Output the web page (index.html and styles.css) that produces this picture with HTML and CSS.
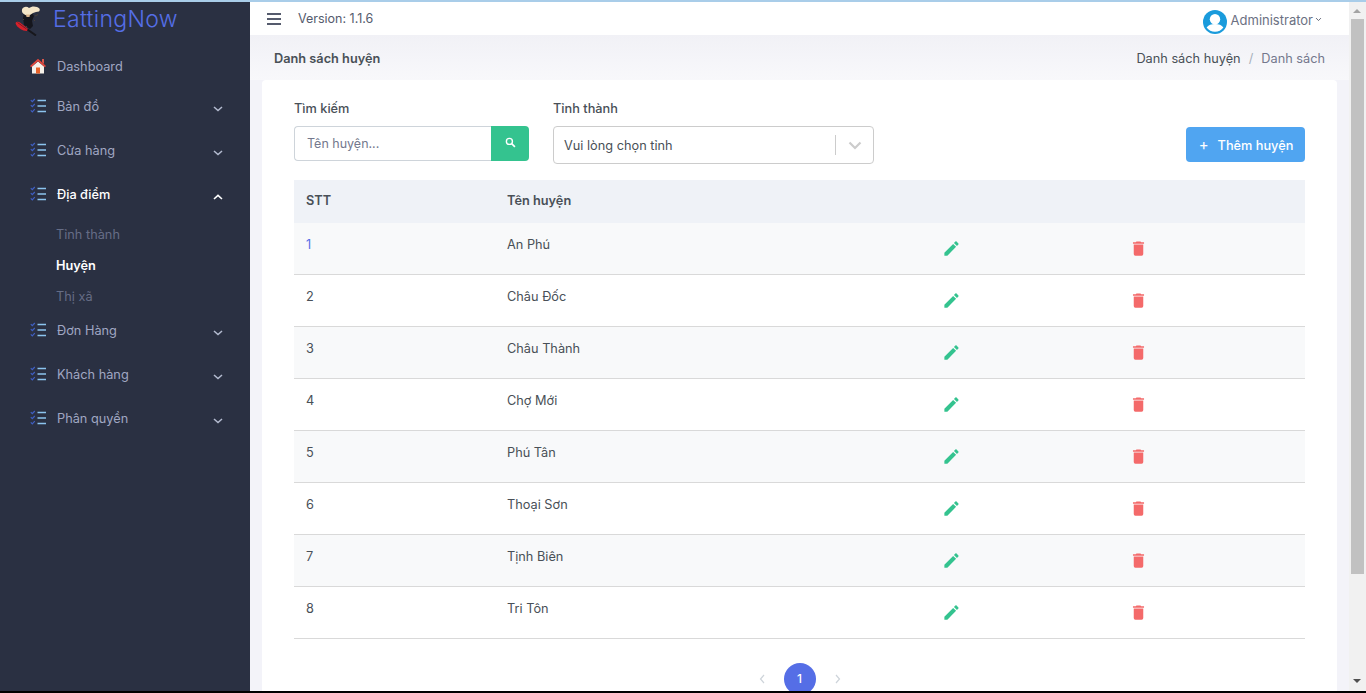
FILE: index.html
```html
<!DOCTYPE html>
<html lang="vi">
<head>
<meta charset="utf-8">
<title>EattingNow</title>
<link rel="stylesheet" href="styles.css">
</head>
<body>
<svg class="defs" width="0" height="0" aria-hidden="true">
  <symbol id="list" viewBox="0 0 16 16">
    <path d="M.8 2.200l1.500 1.500L4.800 1M.8 7.200l1.500 1.500L4.800 6M.8 12.400l1.500 1.500 2.500-2.700" fill="none" stroke="#3f5fc4" stroke-width="1.200"/>
    <path d="M7.500 2.500h8.500M7.500 8h8.500M7.500 13.500h8.500" fill="none" stroke="#8cc4ee" stroke-width="1.500"/>
  </symbol>
  <symbol id="chev-down" viewBox="0 0 10 6"><path d="M1 1l4 3.600L9 1" fill="none" stroke="#b4bbd0" stroke-width="1.500"/></symbol>
  <symbol id="chev-up" viewBox="0 0 10 6"><path d="M1 5l4-3.600L9 5" fill="none" stroke="#ffffff" stroke-width="1.600"/></symbol>
  <symbol id="pencil" viewBox="0 0 24 24"><path fill="#34c38f" d="M20.71,7.04C21.1,6.65 21.1,6 20.71,5.63L18.37,3.29C18,2.9 17.35,2.9 16.96,3.29L15.12,5.12L18.87,8.87M3,17.25V21H6.75L17.81,9.93L14.06,6.18L3,17.25Z"/></symbol>
  <symbol id="trash" viewBox="0 0 24 24"><path fill="#f46a6a" d="M19,4H15.5L14.5,3H9.5L8.5,4H5V6H19M6,19A2,2 0 0,0 8,21H16A2,2 0 0,0 18,19V7H6V19Z"/></symbol>
</svg>
<div class="window">
  <aside class="sidebar">
    <div class="brand">
      <svg class="brand-logo" viewBox="0 0 26 30" width="26" height="30" aria-hidden="true">
        <path d="M9 7l8 0 2 3-2 5 1 5-3 3-6-4-1-7z" fill="#15161d"/>
        <path d="M7 3.500C8 .5 12 0 14 2c2-1.500 5-2 8-1 3 1 3.500 3 2 4.500-2 .5-4 .5-6 1.500l-3 2c-2 .5-4 .5-5.500-.5C7.500 7.500 6.500 5.500 7 3.500z" fill="#f4e6c8"/>
        <path d="M11 8.500h4l-.5 2.500h-3z" fill="#d9b48c"/>
        <path d="M20 10l3-1.500M19 14l1 1M11 20l1 1M8 13l1 1" stroke="#4a4037" stroke-width="1"/>
        <path d="M.5 17c1-1.500 3-1.500 4.500-.5l7.500 6c.8 1 .5 2.500-1 2.500-3.500 0-10-3.500-11-8z" fill="#d8202b"/>
        <path d="M2.500 16.500l9 6.500" stroke="#7a1c22" stroke-width="1"/>
        <path d="M12.500 23.500l8.500 6" stroke="#17171c" stroke-width="2"/>
      </svg>
      <span class="brand-name">EattingNow</span>
    </div>
    <nav class="menu">
      <a class="item item-first">
        <svg class="item-icon" viewBox="0 0 16 16" aria-hidden="true">
          <path d="M12 1h2v5l-2-1.700z" fill="#d9574c"/>
          <path d="M2 8.500L8 3.500l6 5v7H2z" fill="#f6f1ea"/>
          <path d="M8 .8L0 8l1.200 1.300L8 3.300l6.800 6L16 8z" fill="#e2463c"/>
          <path d="M6 9.500h4v6H6z" fill="#e8622a"/>
        </svg>
        <span class="item-label">Dashboard</span>
      </a>
      <a class="item"><svg class="item-icon"><use href="#list"/></svg><span class="item-label">Bản đồ</span><svg class="chev"><use href="#chev-down"/></svg></a>
      <a class="item"><svg class="item-icon"><use href="#list"/></svg><span class="item-label">Cửa hàng</span><svg class="chev"><use href="#chev-down"/></svg></a>
      <a class="item item-open"><svg class="item-icon"><use href="#list"/></svg><span class="item-label">Địa điểm</span><svg class="chev"><use href="#chev-up"/></svg></a>
      <div class="submenu">
        <a class="sub">Tỉnh thành</a>
        <a class="sub sub-active">Huyện</a>
        <a class="sub">Thị xã</a>
      </div>
      <a class="item"><svg class="item-icon"><use href="#list"/></svg><span class="item-label">Đơn Hàng</span><svg class="chev"><use href="#chev-down"/></svg></a>
      <a class="item"><svg class="item-icon"><use href="#list"/></svg><span class="item-label">Khách hàng</span><svg class="chev"><use href="#chev-down"/></svg></a>
      <a class="item"><svg class="item-icon"><use href="#list"/></svg><span class="item-label">Phân quyền</span><svg class="chev"><use href="#chev-down"/></svg></a>
    </nav>
  </aside>
  <main class="main">
    <header class="topbar">
      <div class="burger"><i></i><i></i><i></i></div>
      <span class="version">Version: 1.1.6</span>
      <div class="user">
        <svg class="avatar" viewBox="0 0 24 24" width="24" height="24" aria-hidden="true">
          <circle cx="12" cy="12" r="12" fill="#1a9bdc"/>
          <circle cx="12" cy="9.200" r="5.200" fill="#fff"/>
          <path d="M3.600 17.500c1.500-2.500 4.800-3.500 8.400-3.500s6.900 1 8.400 3.500c-2 2.800-5 4.300-8.400 4.300s-6.400-1.500-8.400-4.300z" fill="#fff"/>
        </svg>
        <span class="user-name">Administrator</span>
        <svg class="user-caret" viewBox="0 0 10 6" aria-hidden="true"><path d="M1.500 1l3.500 3.500L8.500 1" fill="none" stroke="#555b6d" stroke-width="1.300"/></svg>
      </div>
    </header>
    <div class="titlebar">
      <h1 class="page-title">Danh sách huyện</h1>
      <div class="crumbs"><span class="crumb">Danh sách huyện</span><span class="crumb-sep">/</span><span class="crumb-last">Danh sách</span></div>
    </div>
    <section class="card">
      <div class="filters">
        <div class="field field-search">
          <label class="field-label">Tìm kiếm</label>
          <div class="search">
            <span class="search-input">Tên huyện...</span>
            <span class="search-btn">
              <svg viewBox="0 0 12 12" width="11" height="11" aria-hidden="true"><circle cx="4.800" cy="4.800" r="3.300" fill="none" stroke="#fff" stroke-width="1.500"/><path d="M7.300 7.300l3.500 3.500" stroke="#fff" stroke-width="1.800"/></svg>
            </span>
          </div>
        </div>
        <div class="field field-select">
          <label class="field-label">Tỉnh thành</label>
          <div class="select">
            <span class="select-value">Vui lòng chọn tỉnh</span>
            <span class="select-sep"></span>
            <svg class="select-caret" viewBox="0 0 14 9" aria-hidden="true"><path d="M1.500 1.500L7 7l5.500-5.500" fill="none" stroke="#cccccc" stroke-width="2.200"/></svg>
          </div>
        </div>
        <button class="add-btn"><span class="add-plus">+</span>Thêm huyện</button>
      </div>
      <table class="table">
        <thead>
          <tr><th class="c-stt">STT</th><th class="c-name">Tên huyện</th><th class="c-edit"></th><th class="c-del"></th></tr>
        </thead>
        <tbody>
          <tr><td class="stt-link">1</td><td>An Phú</td><td class="act-edit"><svg class="ico"><use href="#pencil"/></svg></td><td class="act-del"><svg class="ico"><use href="#trash"/></svg></td></tr>
          <tr><td>2</td><td>Châu Đốc</td><td class="act-edit"><svg class="ico"><use href="#pencil"/></svg></td><td class="act-del"><svg class="ico"><use href="#trash"/></svg></td></tr>
          <tr><td>3</td><td>Châu Thành</td><td class="act-edit"><svg class="ico"><use href="#pencil"/></svg></td><td class="act-del"><svg class="ico"><use href="#trash"/></svg></td></tr>
          <tr><td>4</td><td>Chợ Mới</td><td class="act-edit"><svg class="ico"><use href="#pencil"/></svg></td><td class="act-del"><svg class="ico"><use href="#trash"/></svg></td></tr>
          <tr><td>5</td><td>Phú Tân</td><td class="act-edit"><svg class="ico"><use href="#pencil"/></svg></td><td class="act-del"><svg class="ico"><use href="#trash"/></svg></td></tr>
          <tr><td>6</td><td>Thoại Sơn</td><td class="act-edit"><svg class="ico"><use href="#pencil"/></svg></td><td class="act-del"><svg class="ico"><use href="#trash"/></svg></td></tr>
          <tr><td>7</td><td>Tịnh Biên</td><td class="act-edit"><svg class="ico"><use href="#pencil"/></svg></td><td class="act-del"><svg class="ico"><use href="#trash"/></svg></td></tr>
          <tr><td>8</td><td>Tri Tôn</td><td class="act-edit"><svg class="ico"><use href="#pencil"/></svg></td><td class="act-del"><svg class="ico"><use href="#trash"/></svg></td></tr>
        </tbody>
      </table>
      <div class="pager">
        <svg class="pager-arrow" viewBox="0 0 6 10" aria-hidden="true"><path d="M5 1L1.500 5 5 9" fill="none" stroke="#ced4da" stroke-width="1.200"/></svg>
        <span class="pager-num">1</span>
        <svg class="pager-arrow" viewBox="0 0 6 10" aria-hidden="true"><path d="M1 1l3.500 4L1 9" fill="none" stroke="#ced4da" stroke-width="1.200"/></svg>
      </div>
    </section>
  </main>
  <div class="scrollbar">
    <span class="arrow-up"></span>
    <span class="thumb"></span>
    <span class="arrow-down"></span>
  </div>
</div>
</body>
</html>
```
FILE: styles.css
```css
* { box-sizing: border-box; }
html, body { margin: 0; height: 100%; overflow: hidden; }
body {
  font-family: Inter, "Open Sans", "Liberation Sans", sans-serif;
  font-size: 12.750px;
  color: #495057;
  background: #000;
}
.defs { position: absolute; }
.window {
  display: flex;
  height: 691px;
  border-top: 2px solid #a9cde9;
  background: #f3f3f9;
  overflow: hidden;
}

/* Sidebar */
.sidebar { flex: 0 0 250px; background: #2a3042; }
.brand { display: flex; align-items: center; height: 34px; padding-left: 15px; }
.brand-logo { flex: none; margin-top: 3px; }
.brand-name { margin-left: 12px; font-size: 23px; font-weight: 300; line-height: 34px; color: #556ee6; letter-spacing: .3px; }
.menu { display: flex; flex-direction: column; padding-top: 8px; }
.item { display: flex; align-items: center; height: 44px; padding: 0 27px 0 30px; color: #a0a7c2; }
.item:not(.item-first) { padding-bottom: 4px; }
.item-first + .item { margin-top: -2px; }
.item-icon { flex: none; width: 16px; height: 16px; }
.item-label { margin-left: 11px; flex: 1; }
.chev { flex: none; width: 10px; height: 6px; margin-top: 6px; }
.item-open .item-label { color: #fff; font-weight: 500; }
.submenu { display: flex; flex-direction: column; padding-left: 56px; margin: 1px 0 -2px; }
.sub { height: 31px; line-height: 31px; color: #666d86; }
.sub-active { color: #fff; font-weight: 600; }

/* Main */
.main { flex: 1; min-width: 0; display: flex; flex-direction: column; overflow: hidden; }
.topbar { flex: 0 0 33px; display: flex; align-items: center; background: #fff; padding: 0 24px 0 17px; }
.burger { display: flex; flex-direction: column; gap: 2.500px; width: 14px; margin-top: 1px; }
.burger i { display: block; height: 2.500px; background: #555b6d; }
.version { margin: 0 0 1px 17px; color: #555b6d; font-size: 12.500px; }
.user { margin-left: auto; display: flex; align-items: center; margin-top: 6px; padding-right: 3px; }
.avatar { flex: none; }
.user-name { margin-left: 4px; color: #6b7182; font-size: 13px; margin-top: -4px; }
.user-caret { flex: none; width: 7px; height: 5px; margin: -4px 0 0 2px; }

.titlebar {
  flex: 0 0 45px;
  display: flex;
  align-items: center;
  justify-content: space-between;
  padding: 1px 24px 0;
  background: linear-gradient(#f1f1f6, #f8f8fb);
}
.page-title { margin: 0; font-size: 12.750px; font-weight: 600; color: #495057; }
.crumbs { display: flex; align-items: center; }
.crumb { color: #495057; }
.crumb-sep { margin: 0 8px; color: #a6b0bb; }
.crumb-last { color: #74788d; }

.card { flex: 1; margin: 0 12px; padding: 18px 32px 0; background: #fff; border-radius: 4px 4px 0 0; }
.filters { display: flex; align-items: flex-start; }
.field-label { display: block; height: 18px; line-height: 22px; margin-bottom: 10px; font-weight: 500; color: #495057; }
.field-search { flex: 0 0 235px; }
.field-select { flex: 0 0 321px; margin-left: 24px; }
.search { display: flex; height: 35px; }
.search-input {
  flex: 1;
  padding-left: 12px;
  line-height: 33px;
  color: #74788d;
  font-size: 12.500px;
  border: 1px solid #ced4da;
  border-right: 0;
  border-radius: 4px 0 0 4px;
}
.search-btn { flex: 0 0 38px; display: flex; align-items: center; justify-content: center; padding-bottom: 2px; background: #34c38f; border-radius: 0 4px 4px 0; }
.select { display: flex; align-items: center; height: 38px; padding: 0 11px 0 10px; border: 1px solid #ccc; border-radius: 4px; }
.select-value { flex: 1; color: #495057; }
.select-sep { width: 1px; height: 20px; background: #ccc; }
.select-caret { width: 14px; height: 9px; margin-left: 12px; }
.add-btn {
  margin: 29px 0 0 auto;
  padding: 0 2px 0 3px;
  width: 119px;
  height: 35px;
  border: 0;
  border-radius: 4px;
  background: #50a5f1;
  color: #fff;
  font: 500 12.750px Inter, "Open Sans", "Liberation Sans", sans-serif;
}
.add-plus { margin-right: 9px; font-size: 15px; font-weight: 400; }

.table { width: 100%; margin-top: 16px; border-collapse: separate; border-spacing: 0; table-layout: fixed; }
.table th { height: 43px; padding: 0 12px 2px; text-align: left; font-weight: 600; background: #eff2f7; color: #495057; }
.c-stt { width: 201px; }
.c-name { width: 437px; }
.c-edit { width: 197px; }
.table td { height: 52px; padding: 13px 12px 0; line-height: 18px; vertical-align: top; color: #495057; border-bottom: 1px solid #d9d9d9; }
.table tbody tr:nth-child(odd) td { background: #f8f9fa; }
.table td.stt-link { color: #556ee6; }
.table td.act-edit { padding: 16px 0 0 10px; }
.table td.act-del { padding: 16px 0 0; }
.ico { display: block; width: 19px; height: 19px; }
.pager { display: flex; align-items: center; justify-content: center; gap: 19px; margin-top: 24px; }
.pager-arrow { width: 6px; height: 10px; }
.pager-num { width: 32px; height: 32px; line-height: 32px; text-align: center; border-radius: 50%; background: #556ee6; color: #fff; font-size: 12px; font-weight: 500; }

/* Scrollbar */
.scrollbar { flex: 0 0 17px; position: relative; background: #f1f1f1; }
.thumb { position: absolute; left: 2px; top: 17px; width: 13px; height: 555px; background: #c1c1c1; }
.arrow-up { position: absolute; left: 4px; top: 7px; border: 4px solid transparent; border-top: 0; border-bottom: 4px solid #a3a3a3; }
.arrow-down { position: absolute; left: 4px; bottom: 8px; border: 4px solid transparent; border-bottom: 0; border-top: 4px solid #505050; }
```
